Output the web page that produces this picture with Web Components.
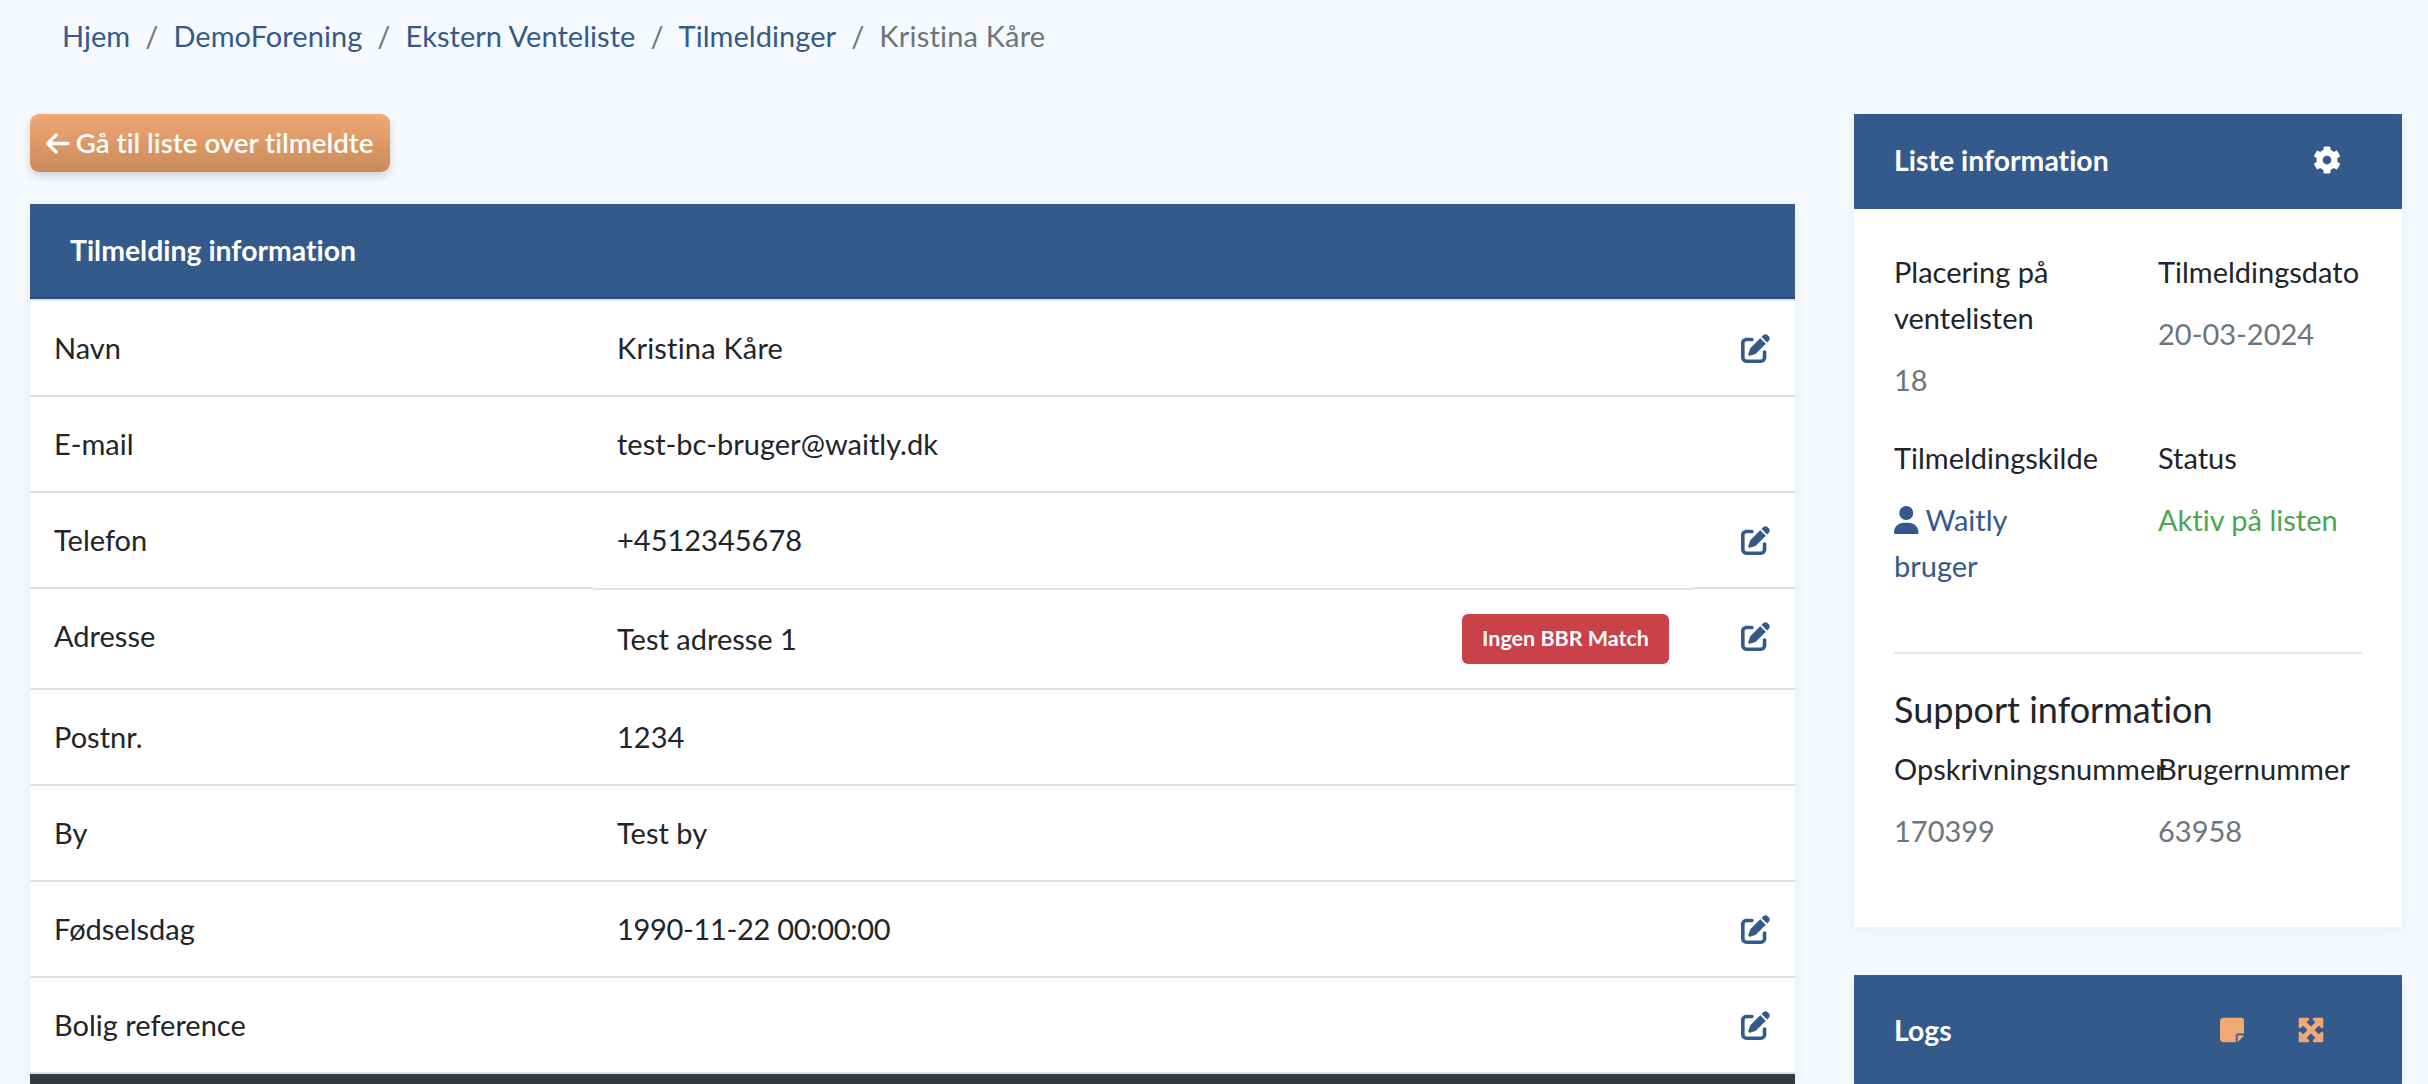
<!DOCTYPE html>
<html lang="da">
<head>
<meta charset="UTF-8">
<title>Kristina Kåre</title>
<style>
  :root {
    --blue: #34598b;
    --orange: #f0a875;
    --text: #212529;
    --muted: #6c757d;
    --line: #dee2e6;
  }
  html, body { height: 100%; overflow: hidden; }
  body {
    margin: 0;
    background: #f6f9fe;
    color: var(--text);
    font: 29px/46px Lato, "Open Sans", sans-serif;
    font-variant-ligatures: none;
  }
</style>
</head>
<body>
<app-page>
  <bread-crumbs slot="top">
    <a>Hjem</a><a>DemoForening</a><a>Ekstern Venteliste</a><a>Tilmeldinger</a><span>Kristina Kåre</span>
  </bread-crumbs>

  <back-button slot="left">Gå til liste over tilmeldte</back-button>
  <info-table slot="left" heading="Tilmelding information">
    <info-row label="Navn" editable><span style="letter-spacing:.2px">Kristina Kåre</span></info-row>
    <info-row label="E-mail">test-bc-bruger@waitly.dk</info-row>
    <info-row label="Telefon" editable>+4512345678</info-row>
    <info-row label="Adresse" editable tall>Test adresse 1<red-badge slot="extra">Ingen BBR Match</red-badge></info-row>
    <info-row label="Postnr.">1234</info-row>
    <info-row label="By">Test by</info-row>
    <info-row label="Fødselsdag" editable><span style="letter-spacing:-.3px">1990-11-22 00:00:00</span></info-row>
    <info-row label="Bolig reference" editable></info-row>
  </info-table>

  <side-card slot="right" heading="Liste information">
    <fa-icon slot="actions" name="gear" color="#fff" style="margin-right:61px"></fa-icon>
    <field-grid>
      <info-field label="Placering på ventelisten">18</info-field>
      <info-field label="Tilmeldingsdato">20-03-2024</info-field>
      <info-field label="Tilmeldingskilde" tone="link"><fa-icon name="user" size="28" color="#34598b" style="vertical-align:-3px"></fa-icon> Waitly bruger</info-field>
      <info-field label="Status" tone="ok">Aktiv på listen</info-field>
    </field-grid>
    <section-head>Support information</section-head>
    <field-grid>
      <info-field label="Opskrivningsnummer">170399</info-field>
      <info-field label="Brugernummer">63958</info-field>
    </field-grid>
  </side-card>

  <side-card slot="right" heading="Logs" tall>
    <fa-icon slot="actions" name="note" color="#f0a875" style="margin-right:53px"></fa-icon>
    <fa-icon slot="actions" name="expand" color="#f0a875" style="margin-right:77px"></fa-icon>
  </side-card>
</app-page>

<script>
  const ICONS = {
    arrow: [448, "M9.4 233.4c-12.5 12.5-12.5 32.8 0 45.3l160 160c12.5 12.5 32.8 12.5 45.3 0s12.5-32.8 0-45.3L109.2 288 416 288c17.7 0 32-14.3 32-32s-14.3-32-32-32l-306.7 0 105.4-105.4c12.5-12.5 12.5-32.8 0-45.3s-32.8-12.5-45.3 0l-160 160z"],
    edit: [512, "M471.6 21.7c-21.9-21.9-57.3-21.9-79.2 0L362.3 51.7l97.9 97.9 30.1-30.1c21.9-21.9 21.9-57.3 0-79.2L471.6 21.7zm-299.2 220c-6.1 6.1-10.8 13.6-13.5 21.9l-29.6 88.8c-2.9 8.6-.6 18.1 5.8 24.6s15.9 8.7 24.6 5.8l88.8-29.6c8.2-2.7 15.7-7.4 21.9-13.5L437.7 172.3 339.7 74.3 172.4 241.7zM96 64C43 64 0 107 0 160V416c0 53 43 96 96 96H352c53 0 96-43 96-96V320c0-17.7-14.3-32-32-32s-32 14.3-32 32v96c0 17.7-14.3 32-32 32H96c-17.7 0-32-14.3-32-32V160c0-17.7 14.3-32 32-32h96c17.7 0 32-14.3 32-32s-14.3-32-32-32H96z"],
    gear: [512, "M487.4 315.7l-42.6-24.6c4.3-23.2 4.3-47 0-70.2l42.6-24.6c4.9-2.8 7.1-8.6 5.5-14-11.1-35.6-30-67.8-54.7-94.6-3.8-4.1-10-5.1-14.8-2.3L380.8 110c-17.9-15.4-38.5-27.3-60.8-35.1V25.8c0-5.6-3.9-10.5-9.4-11.7-36.7-8.2-74.3-7.8-109.2 0-5.5 1.2-9.4 6.1-9.4 11.7V75c-22.2 7.9-42.8 19.8-60.8 35.1L88.7 85.5c-4.9-2.8-11-1.9-14.8 2.3-24.7 26.7-43.6 58.9-54.7 94.6-1.7 5.4.6 11.2 5.5 14L67.3 221c-4.3 23.2-4.3 47 0 70.2l-42.6 24.6c-4.9 2.8-7.1 8.6-5.5 14 11.1 35.6 30 67.8 54.7 94.6 3.8 4.1 10 5.1 14.8 2.3l42.6-24.6c17.9 15.4 38.5 27.3 60.8 35.1v49.2c0 5.6 3.9 10.5 9.4 11.7 36.7 8.2 74.3 7.8 109.2 0 5.5-1.2 9.4-6.1 9.4-11.7v-49.2c22.2-7.9 42.8-19.8 60.8-35.1l42.6 24.6c4.9 2.8 11 1.9 14.8-2.3 24.7-26.7 43.6-58.9 54.7-94.6 1.5-5.5-.7-11.3-5.6-14.1zM256 336c-44.1 0-80-35.9-80-80s35.9-80 80-80 80 35.9 80 80-35.9 80-80 80z"],
    user: [448, "M224 256A128 128 0 1 0 224 0a128 128 0 1 0 0 256zm-45.7 48C79.8 304 0 383.8 0 482.3C0 498.7 13.3 512 29.7 512H418.3c16.4 0 29.7-13.3 29.7-29.7C448 383.8 368.2 304 269.7 304H178.3z"],
    note: [448, "M64 32C28.7 32 0 60.7 0 96V416c0 35.3 28.7 64 64 64H288V368c0-26.5 21.5-48 48-48H448V96c0-35.3-28.7-64-64-64H64zM448 352H402.7 336c-8.8 0-16 7.2-16 16v66.7V480l32-32 64-64 32-32z"],
    expand: [512, "M200 32H56C42.7 32 32 42.7 32 56V200c0 9.7 5.8 18.5 14.8 22.2s19.3 1.7 26.2-5.2l40-40 79 79-79 79L73 295c-6.9-6.9-17.2-8.9-26.2-5.2S32 302.3 32 312V456c0 13.3 10.7 24 24 24H200c9.7 0 18.5-5.8 22.2-14.8s1.7-19.3-5.2-26.2l-40-40 79-79 79 79-40 40c-6.9 6.9-8.9 17.2-5.2 26.2s12.5 14.8 22.2 14.8H456c13.3 0 24-10.7 24-24V312c0-9.7-5.8-18.5-14.8-22.2s-19.3-1.7-26.2 5.2l-40 40-79-79 79-79 40 40c6.9 6.9 17.2 8.9 26.2 5.2s14.8-12.5 14.8-22.2V56c0-13.3-10.7-24-24-24H312c-9.7 0-18.5 5.8-22.2 14.8s-1.7 19.3 5.2 26.2l40 40-79 79-79-79 40-40c6.9-6.9 8.9-17.2 5.2-26.2S209.7 32 200 32z"]
  };

  // small helper so every class stays a few lines
  class Base extends HTMLElement {
    render(html) {
      if (!this.shadowRoot) this.attachShadow({ mode: "open" });
      this.shadowRoot.innerHTML = html;
    }
  }

  customElements.define("fa-icon", class extends Base {
    connectedCallback() {
      const [w, d] = ICONS[this.getAttribute("name")];
      const size = this.getAttribute("size") || 28;
      const color = this.getAttribute("color") || "currentColor";
      this.render(`
        <style>:host { display: inline-block; line-height: 0; } svg { display: block; }</style>
        <svg width="${size * w / 512}" height="${size}" viewBox="0 0 ${w} 512" fill="${color}"><path d="${d}"/></svg>`);
    }
  });

  customElements.define("app-page", class extends Base {
    connectedCallback() {
      this.render(`
        <style>
          :host { display: block; }
          .top { padding: 13px 0 0 62px; height: 114px; box-sizing: border-box; }
          .cols { display: grid; grid-template-columns: 1765px 548px; column-gap: 59px; padding-left: 30px; }
          .right { display: flex; flex-direction: column; gap: 48px; }
        </style>
        <div class="top"><slot name="top"></slot></div>
        <div class="cols">
          <div><slot name="left"></slot></div>
          <div class="right"><slot name="right"></slot></div>
        </div>`);
    }
  });

  customElements.define("bread-crumbs", class extends Base {
    connectedCallback() {
      const parts = [...this.children].map(el =>
        el.tagName === "A" ? `<a>${el.textContent}</a>` : `<span>${el.textContent}</span>`);
      this.render(`
        <style>
          :host { display: block; }
          nav { display: flex; letter-spacing: .05px; }
          a { color: var(--blue); }
          span { color: var(--muted); letter-spacing: .2px; }
          i { font-style: normal; color: var(--muted); padding: 0 15px; }
        </style>
        <nav>${parts.join("<i>/</i>")}</nav>`);
    }
  });

  customElements.define("back-button", class extends Base {
    connectedCallback() {
      this.render(`
        <style>
          :host {
            display: flex; align-items: center; gap: 6px;
            width: 360px; height: 58px; box-sizing: border-box; padding-left: 16px;
            margin-bottom: 32px;
            color: #fff; font-size: 27.7px; font-weight: 600;
            background: linear-gradient(#f0a875, #c98a5a);
            border-radius: 9px;
            box-shadow: 0 4px 10px rgba(0,0,0,.16);
            white-space: nowrap;
          }
        </style>
        <fa-icon name="arrow" color="#fff" size="27"></fa-icon><slot></slot>`);
    }
  });

  customElements.define("info-table", class extends Base {
    connectedCallback() {
      this.render(`
        <style>
          :host { display: block; background: #fff; box-shadow: 0 4px 14px rgba(40,70,120,.06); }
          header {
            height: 95px; box-sizing: border-box; padding: 23px 40px 0;
            background: var(--blue); border-bottom: 2px solid #2c4e7d;
            color: #fff; font-size: 28.4px; font-weight: 700;
          }
          .dark { height: 10px; background: #343a40; border-top: 2px solid var(--line); }
        </style>
        <header>${this.getAttribute("heading")}</header>
        <slot></slot>
        <div class="dark"></div>`);
    }
  });

  customElements.define("info-row", class extends Base {
    connectedCallback() {
      const pen = this.hasAttribute("editable") ? `<fa-icon name="edit" color="#34598b" size="29"></fa-icon>` : "";
      this.render(`
        <style>
          :host {
            display: grid; grid-template-columns: 563px 1100px 102px;
            line-height: 46px;
          }
          .cell { border-top: 2px solid var(--line); padding: 24px; box-sizing: border-box; min-height: 96px; }
          .val { display: flex; justify-content: space-between; align-items: center; }
          :host([tall]) .val { margin-top: 1px; }
          .act { display: flex; justify-content: flex-end; padding: 33px 25px 0 0; }
        </style>
        <div class="cell">${this.getAttribute("label")}</div>
        <div class="cell val"><span><slot></slot></span><slot name="extra"></slot></div>
        <div class="cell act">${pen}</div>`);
    }
  });

  customElements.define("red-badge", class extends Base {
    connectedCallback() {
      this.render(`
        <style>
          :host {
            display: block; height: 50px; padding: 0 20px;
            font-size: 21.5px; font-weight: 700; line-height: 48px; color: #fff;
            background: #c9424a; border-radius: 6px;
          }
        </style>
        <slot></slot>`);
    }
  });

  customElements.define("side-card", class extends Base {
    connectedCallback() {
      const tall = this.hasAttribute("tall");
      this.render(`
        <style>
          :host { display: block; background: #fff; box-shadow: 0 4px 14px rgba(40,70,120,.06); }
          header {
            display: flex; align-items: center; justify-content: space-between;
            height: ${tall ? 109 : 95}px; box-sizing: border-box; padding-left: 40px;
            padding-bottom: ${tall ? 0 : 3}px;
            background: var(--blue); color: #fff; font-size: 28.4px; font-weight: 700;
          }
          .acts { display: flex; align-items: center; }
          .body { padding: 40px 40px 41px; }
        </style>
        <header><span>${this.getAttribute("heading")}</span><div class="acts"><slot name="actions"></slot></div></header>
        ${tall ? "" : '<div class="body"><slot></slot></div>'}`);
    }
  });

  customElements.define("field-grid", class extends Base {
    connectedCallback() {
      this.render(`
        <style>
          :host { display: grid; grid-template-columns: 264px 204px; }
        </style>
        <slot></slot>`);
    }
  });

  customElements.define("info-field", class extends Base {
    connectedCallback() {
      const tone = { link: "#34598b", ok: "#4ca64f" }[this.getAttribute("tone")] || "var(--muted)";
      this.render(`
        <style>
          :host { display: block; min-width: 0; width: 200px; margin-bottom: 32px; line-height: 46px; }
          .l { margin-bottom: 16px; }
          .v { color: ${tone}; }
        </style>
        <div class="l">${this.getAttribute("label")}</div>
        <div class="v"><slot></slot></div>`);
    }
  });

  customElements.define("section-head", class extends Base {
    connectedCallback() {
      this.render(`
        <style>
          :host {
            display: block; margin-top: 31px; padding-top: 30px;
            border-top: 2px solid #e5e7ea;
            font-size: 36px; line-height: 50px; margin-bottom: 12px;
          }
        </style>
        <slot></slot>`);
    }
  });
</script>
</body>
</html>
